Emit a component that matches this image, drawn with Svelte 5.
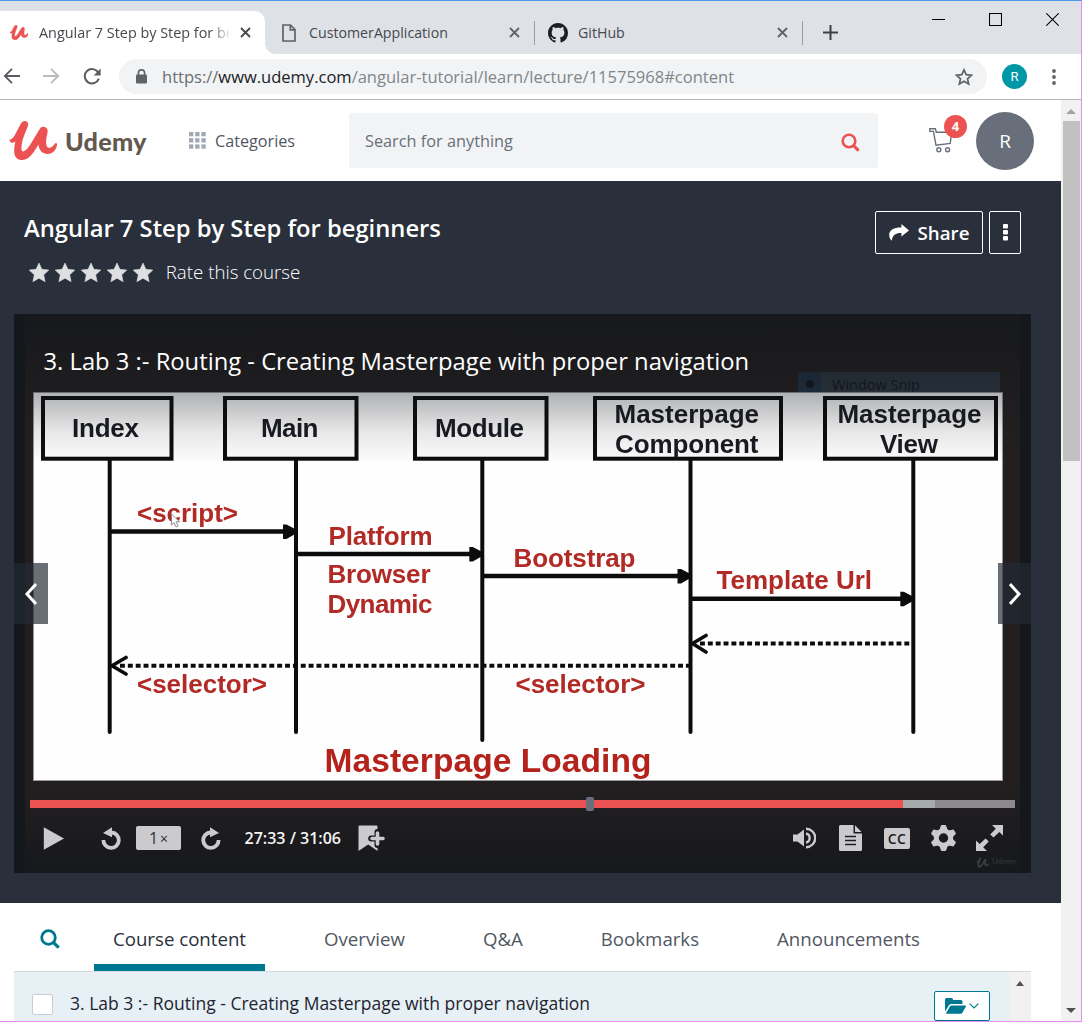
<script>
  const markPath =
    'M.2 18.6C2.2 19 4.2 17 5.6 14.6L11.4 3.6C12.6 1.2 14 0 15.8 0C18.2 0 19.8 2 19 4.6C18 8 14.6 15 13.2 21C12.4 24.6 11.6 30.4 14.2 30.4C17.4 30.4 22 22.6 25.2 17L30.6 8.2C31.8 6.4 33 5.6 34.6 5.8C37.4 6 39 8 38.6 11C38 15 36.4 19.6 37.4 24C38 26.6 39.6 27.4 41.6 26.6C43.8 25.8 45 23.4 46.4 22.2C47.4 21.6 48.2 22.4 48 24C47.4 28.4 44 33 38.6 33C33.6 33 30 29.6 29.4 23.6C25.4 30.6 20.6 39 13.4 39C8 39 5 35.4 5.2 29.6C5.2 26.6 5.6 23.6 6.4 20.2C5 21.6 3.6 22.2 2.2 21.4C1 20.8 .2 19.8 .2 18.6Z';

  const tabs = ['Overview', 'Q&A', 'Bookmarks', 'Announcements'];
  const lecture = '3. Lab 3 :- Routing - Creating Masterpage with proper navigation';

  const boxes = [
    { x: 43, w: 128.5 },
    { x: 225, w: 131.5 },
    { x: 415, w: 131.5 },
    { x: 595, w: 186 },
    { x: 825, w: 171 },
  ];
  const lifelines = [
    [109.7, 732], [296, 732], [482.3, 740], [690.5, 732], [913.3, 732],
  ];
  const calls = [
    [110, 296, 531.5], [296, 482.3, 554], [482, 690.5, 576], [690, 913.3, 598.7],
  ];
  const names = [
    ['Index', 72, 67, 437], ['Main', 261, 57.5, 437], ['Module', 435, 89, 437],
    ['Masterpage', 614.5, 144.5, 422.5], ['Component', 615, 143.5, 452.5],
    ['Masterpage', 837.5, 144, 422.5], ['View', 880, 58, 452.5],
  ];
  const labels = [
    ['<script>', 137, 101, 521.5], ['Platform', 328.5, 104, 544.5],
    ['Browser', 327.5, 103, 582.5], ['Dynamic', 327.5, 105, 612.5],
    ['Bootstrap', 513.5, 122, 566.5], ['Template Url', 716.5, 155.5, 588.5],
    ['<selector>', 137, 130, 692.5], ['<selector>', 515.5, 130, 692.5],
  ];
</script>

<div class="window">
  <div class="strip">
    <div class="tab active">
      <svg class="fav" width="18" height="15" viewBox="0 0 48 39"><path d={markPath} fill="#ec5252" stroke="#ec5252" stroke-width="1.5" /></svg>
      <span class="tabtitle fade">Angular 7 Step by Step for beginners</span>
      <svg class="close" width="11" height="11" viewBox="0 0 11 11"><path d="M1 1l9 9M10 1l-9 9" /></svg>
    </div>
    <div class="tab second">
      <svg width="14" height="18" viewBox="0 0 14 18"><path d="M1 1h7.5l4.5 4.5V17H1zM8.3 1v4.8H13" fill="none" stroke="#5f6368" stroke-width="1.7" /></svg>
      <span class="tabtitle">CustomerApplication</span>
      <svg class="close" width="11" height="11" viewBox="0 0 11 11"><path d="M1 1l9 9M10 1l-9 9" /></svg>
    </div>
    <div class="tab third">
      <svg width="20" height="20" viewBox="0 0 16 16"><path fill="#1b1f23" d="M8 0C3.58 0 0 3.58 0 8c0 3.54 2.29 6.53 5.47 7.59.4.07.55-.17.55-.38 0-.19-.01-.82-.01-1.49-2.01.37-2.53-.49-2.69-.94-.09-.23-.48-.94-.82-1.13-.28-.15-.68-.52-.01-.53.63-.01 1.08.58 1.23.82.72 1.21 1.87.87 2.33.66.07-.52.28-.87.51-1.07-1.78-.2-3.64-.89-3.64-3.95 0-.87.31-1.59.82-2.15-.08-.2-.36-1.02.08-2.12 0 0 .67-.21 2.2.82.64-.18 1.32-.27 2-.27s1.36.09 2 .27c1.53-1.04 2.2-.82 2.2-.82.44 1.1.16 1.92.08 2.12.51.56.82 1.27.82 2.15 0 3.07-1.87 3.75-3.65 3.95.29.25.54.73.54 1.48 0 1.07-.01 1.93-.01 2.2 0 .21.15.46.55.38A8.01 8.01 0 0 0 16 8c0-4.42-3.58-8-8-8z" /></svg>
      <span class="tabtitle">GitHub</span>
      <svg class="close" width="11" height="11" viewBox="0 0 11 11"><path d="M1 1l9 9M10 1l-9 9" /></svg>
    </div>
    <svg class="plus" width="15" height="15" viewBox="0 0 15 15"><path d="M7.5 0v15M0 7.5h15" stroke="#3c4043" stroke-width="2" /></svg>
    <div class="controls">
      <svg width="13" height="13" viewBox="0 0 13 13"><path d="M0 6.5h13" /></svg>
      <svg width="13" height="13" viewBox="0 0 13 13"><path d="M.5 .5h12v12H.5z" /></svg>
      <svg width="13" height="13" viewBox="0 0 13 13"><path d="M.3.3l12.4 12.4M12.7.3L.3 12.7" /></svg>
    </div>
  </div>

  <div class="toolbar">
    <svg class="back" width="17" height="16" viewBox="0 0 17 16"><path d="M17 8H2M9 .8L1.8 8 9 15.2" fill="none" stroke="#5a5e63" stroke-width="1.9" /></svg>
    <svg class="fwd" width="17" height="16" viewBox="0 0 17 16"><path d="M0 8h15M8 .8L15.2 8 8 15.2" fill="none" stroke="#babcbe" stroke-width="1.9" /></svg>
    <svg class="reload" width="18" height="17" viewBox="0 0 18 17"><path d="M15.2 4.6A7.2 7.2 0 1 0 15.8 10.6" fill="none" stroke="#5a5e63" stroke-width="2" /><path d="M17.6.4v7h-7z" fill="#5a5e63" /></svg>
    <div class="omnibox">
      <svg width="11" height="15" viewBox="0 0 11 15"><path d="M2.4 6V4a3.1 3.1 0 0 1 6.2 0v2" fill="none" stroke="#5f6368" stroke-width="1.6" /><rect x="0" y="5.4" width="11" height="9" rx="1.2" fill="#5f6368" /></svg>
      <span class="url"><span class="scheme">https://</span><span class="host">www.udemy.com</span>/angular-tutorial/learn/lecture/11575968#content</span>
      <svg width="18" height="18" viewBox="0 0 18 18"><path d="M9 1.8l2.2 4.9 5.3.5-4 3.6 1.2 5.3L9 13.3l-4.7 2.8 1.2-5.3-4-3.6 5.3-.5z" fill="none" stroke="#5f6368" stroke-width="1.7" /></svg>
    </div>
    <span class="profile">R</span>
    <svg width="4" height="16" viewBox="0 0 4 16"><g fill="#5f6368"><circle cx="2" cy="2" r="1.9" /><circle cx="2" cy="8" r="1.9" /><circle cx="2" cy="14" r="1.9" /></g></svg>
  </div>

  <div class="viewport">
    <div class="page">
      <header>
        <svg class="mark" width="48" height="39" viewBox="0 0 48 39"><path d={markPath} fill="#ec5252" /></svg>
        <span class="brand">Udemy</span>
        <svg class="grid" width="17" height="17" viewBox="0 0 17 17">
          <g fill="#a1a7b3">
            {#each [0, 6.2, 12.4] as gy}{#each [0, 6.2, 12.4] as gx}<rect x={gx} y={gy} width="4.3" height="4.3" />{/each}{/each}
          </g>
        </svg>
        <span class="cat">Categories</span>
        <div class="search">
          <span>Search for anything</span>
          <svg width="19" height="19" viewBox="0 0 19 19"><circle cx="8" cy="8" r="6.3" fill="none" stroke="#ec5252" stroke-width="2.6" /><path d="M12.6 12.6l5 5" stroke="#ec5252" stroke-width="3" /></svg>
        </div>
        <div class="cart">
          <svg width="24" height="25" viewBox="0 0 24 25"><g fill="none" stroke="#686f7a" stroke-width="1.400"><path d="M.8 .8h5.600l.9 3.400h15.400L21.200 15.400 7 17.200 4.400 3.400H.8z" /><circle cx="9.800" cy="21.800" r="2" /><circle cx="18.600" cy="21.800" r="2" /></g></svg>
          <span class="badge">4</span>
        </div>
        <span class="avatar">R</span>
      </header>

      <section class="hero">
        <div class="heading">
          <div>
            <h1>Angular 7 Step by Step for beginners</h1>
            <div class="rate">
              {#each [1, 2, 3, 4, 5] as s (s)}
                <svg width="20" height="19" viewBox="0 0 20 19"><path d="M10 0l2.9 6.3 6.9.8-5.1 4.7 1.4 6.9L10 15.2l-6.1 3.5 1.4-6.9L.2 7.1l6.9-.8z" fill="#dedfe0" stroke="#dedfe0" stroke-width=".6" /></svg>
              {/each}
              <span>Rate this course</span>
            </div>
          </div>
          <div class="actions">
            <button class="share">
              <svg width="20" height="17" viewBox="0 0 20 17"><path d="M12.4 0L20 6.4l-7.6 6.2V9C7 8.8 3.6 10.6 2.8 16.8 1 15 0 12.6.2 10.4.6 5.4 5.4 3.2 12.4 3.4z" fill="#fff" /></svg>
              Share
            </button>
            <button class="more">
              <svg width="5" height="17" viewBox="0 0 5 17"><g fill="#fff"><rect width="5" height="4.4" rx="1" /><rect y="6" width="5" height="4.4" rx="1" /><rect y="12" width="5" height="4.4" rx="1" /></g></svg>
            </button>
          </div>
        </div>

        <div class="player">
          <div class="video">
            <div class="snip"><i></i><span>Window Snip</span></div>
            <svg class="slide" width="970" height="389" viewBox="33 392 970 389">
              <rect x="33" y="392" width="970" height="389" fill="#fefefe" />
              <g class="soft" fill="none" stroke="#0c0c0c">
                {#each boxes as b}<rect x={b.x} y="398" width={b.w} height="60.7" stroke-width="4" />{/each}
                {#each lifelines as [x, y]}<path d="M{x} 460V{y}" stroke-width="4" stroke-linecap="round" />{/each}
                {#each calls as [a, z, y]}
                  <path d="M{a} {y}H{z - 6}" stroke-width="4.6" />
                  <path d="M{z - 13} {y - 7}h3.500l9.500 5v4l-9.500 5.500h-3.500z" fill="#0c0c0c" stroke="none" />
                {/each}
                <path d="M120 665.700H690M700 643.500H913" stroke-width="4" stroke-dasharray="4.900 2.960" />
                <path d="M126 657.500L112 665.700L126 674M706 635.500L692.500 643.500L706 652" stroke-width="3.600" stroke-linecap="round" />
              </g>
              <g class="soft name">
                {#each names as [t, x, w, y]}<text {x} {y} textLength={w}>{t}</text>{/each}
              </g>
              <g class="soft label">
                {#each labels as [t, x, w, y]}<text {x} {y} textLength={w}>{t}</text>{/each}
                <text class="caption" x="324.500" y="771.700" textLength="327">Masterpage Loading</text>
              </g>
              <path d="M171.500 514v11l2.600-2.400 2 4.400 2-.9-2-4.300h3.600z" fill="#fff" stroke="#777" stroke-width=".8" />
              <rect x="33.500" y="392.500" width="969" height="388" fill="none" stroke="#9a9a9a" />
            </svg>
          </div>
          <div class="shade top"></div>
          <div class="shade bottom"></div>
          <div class="lecture">{lecture}</div>
          <button class="nav prev"><svg width="12" height="22" viewBox="0 0 12 22"><path d="M11 1L2 11l9 10" /></svg></button>
          <button class="nav next"><svg width="12" height="22" viewBox="0 0 12 22"><path d="M1 1l9 10L1 21" /></svg></button>

          <div class="console">
            <div class="progress"><span class="played"></span><span class="buffered"></span><i class="handle"></i></div>
            <div class="bar">
              <svg class="i-play" width="21" height="23" viewBox="0 0 21 23"><path d="M.8 .2L21 11.500.8 22.800z" /></svg>
              <svg class="i-back" width="21" height="23" viewBox="0 0 21 23"><path class="line" d="M10.300 5.500A7.700 7.700 0 1 1 2.400 13" /><path d="M2 6L11 .2v10z" /></svg>
              <span class="speed">1<small>×</small></span>
              <svg class="i-fwd" width="21" height="23" viewBox="0 0 21 23"><path class="line" d="M10.700 5.500A7.700 7.700 0 1 0 18.600 13" /><path d="M19 6L10 .2v10z" /></svg>
              <span class="time">27:33 / 31:06</span>
              <svg class="i-mark" width="27" height="27" viewBox="0 0 27 27"><path d="M1.500 .5h17a1 1 0 0 1 1 1V26L10.200 19.500.5 26V1.500a1 1 0 0 1 1-1z" /><path d="M19.500 7v13M13.200 13.500h12.600" stroke="#1a1b1f" stroke-width="6" stroke-linecap="round" /><path d="M19.500 8v11M14 13.500h11" stroke="#cbcbcd" stroke-width="3.600" stroke-linecap="round" /></svg>
              <span class="spacer"></span>
              <svg class="i-vol" width="23" height="22" viewBox="0 0 23 22"><path d="M0 7.500h4.500L11 2.500v17L4.500 14.500H0z" /><path class="thin" d="M13 6.500a4.600 4.600 0 0 1 0 9" /><path class="thin" d="M13 1.800a9.200 9.200 0 0 1 0 18.400" /></svg>
              <svg class="i-doc" width="23" height="26" viewBox="0 0 23 26"><path d="M1.500 0h13v8.500H23v16a1.500 1.500 0 0 1-1.500 1.500h-20A1.500 1.500 0 0 1 0 24.500v-23A1.500 1.500 0 0 1 1.500 0zM16 .2L22.600 7H16z" /><path d="M6 11.500h11M6 15.500h11M6 19.500h11" stroke="#1c1d20" stroke-width="1.500" /></svg>
              <span class="cc">CC</span>
              <svg class="i-gear" width="25" height="26" viewBox="0 0 25 26">
                <circle cx="12.500" cy="13" r="7.200" fill="none" stroke="#cbcbcd" stroke-width="5" />
                {#each [0, 60, 120, 180, 240, 300] as a}<path d="M9.200 4.500L10.400 .5h4.200l1.200 4z" stroke="#cbcbcd" stroke-linejoin="round" transform="rotate({a} 12.5 13)" />{/each}
              </svg>
              <svg class="i-full" width="27" height="26" viewBox="0 0 27 26"><path d="M16 0h11v10.500L23.300 7 17.500 12.600l-3.300-3.200L19.800 3.700zM11 26H0V15.500L3.700 19l5.800-5.600 3.300 3.200L7.200 22.300z" /></svg>
            </div>
            <div class="watermark"><svg width="13" height="11" viewBox="0 0 48 39"><path d={markPath} /></svg>Udemy</div>
          </div>
        </div>
      </section>

      <nav>
        <svg class="find" width="20" height="20" viewBox="0 0 20 20"><circle cx="8.500" cy="8.500" r="6.800" fill="none" stroke="#007791" stroke-width="2.800" /><path d="M13.300 13.300l5.400 5.400" stroke="#007791" stroke-width="3.200" /></svg>
        <span class="current">Course content</span>
        {#each tabs as t}<span class="item">{t}</span>{/each}
      </nav>

      <div class="list">
        <div class="row">
          <span class="check"></span>
          <span class="rowtitle">{lecture}</span>
          <button class="folder">
            <svg width="21" height="16" viewBox="0 0 21 16"><path d="M0 13.500V1.500A1.500 1.500 0 0 1 1.500 0h5A1.500 1.500 0 0 1 8 1.500V2h8a1.500 1.500 0 0 1 1.500 1.500V6H6.500A3 3 0 0 0 4 7.300z" fill="#007791" /><path d="M.8 15.800L5 8.300A1.600 1.600 0 0 1 6.400 7.400H20.300c.6 0 .9.500.6 1L17.200 15a1.600 1.600 0 0 1-1.400.8z" fill="#007791" /></svg>
            <svg width="10" height="6" viewBox="0 0 10 6"><path d="M.7.7L5 5 9.300.7" fill="none" stroke="#007791" stroke-width="1.200" /></svg>
          </button>
        </div>
        <div class="listscroll"><i></i></div>
      </div>
    </div>
    <div class="scroll">
      <i class="up"></i>
      <div class="thumb"></div>
      <i class="down"></i>
    </div>
  </div>
</div>

<style>
  :global(body) { margin: 0; overflow: hidden; }
  * { box-sizing: border-box; }
  svg { display: block; flex: none; }
  button { margin: 0; padding: 0; font: inherit; color: inherit; cursor: pointer; }
  .window {
    width: 1082px; height: 1022px; display: flex; flex-direction: column; overflow: hidden;
    font-family: "Open Sans", "Noto Sans", sans-serif; background: #fff;
    border-top: 1px solid #4a98e8; border-right: 1px solid #e58cf0; border-bottom: 1px solid #e58cf0;
  }

  .strip { height: 53px; flex: none; display: flex; background: #dee1e6; padding-top: 10px; }
  .tab { display: flex; align-items: center; height: 43px; font-size: 14.2px; color: #45494d; white-space: nowrap; }
  .tabtitle { flex: 1; overflow: hidden; }
  .close { fill: none; stroke: #5f6368; stroke-width: 1.8; }
  .active { position: relative; width: 265px; background: #fff; border-radius: 0 10px 0 0; padding: 0 14.500px 0 10px; }
  .active::after {
    content: ""; position: absolute; left: 265px; bottom: 0; width: 10px; height: 10px;
    background: radial-gradient(circle at 100% 0, transparent 9.500px, #fff 10px);
  }
  .active .tabtitle { margin: 0 11px; font-size: 14.400px; }
  .active .close { stroke: #45494d; }
  .fade { -webkit-mask-image: linear-gradient(90deg, #000 172px, transparent 192px); mask-image: linear-gradient(90deg, #000 172px, transparent 192px); }
  .second { width: 269.500px; padding: 0 15px 0 17px; }
  .second .tabtitle { margin-left: 13px; }
  .third { width: 268px; padding: 0 14.500px 0 13.500px; }
  .third .tabtitle { margin-left: 10px; }
  .second, .third { background: linear-gradient(#9b9ea3, #9b9ea3) right 10px / 1px 24px no-repeat; }
  .plus { margin: 14px 0 0 20px; }
  .controls { display: flex; gap: 44px; margin: 2px 22px 0 auto; }
  .controls svg { fill: none; stroke: #000; stroke-width: 1.050; }

  .toolbar { height: 46px; flex: none; display: flex; align-items: center; padding: 0 25px 0 3px; border-bottom: 1px solid #b4b6b8; }
  .back, .fwd, .reload { position: relative; top: -.5px; }
  .fwd { margin-left: 23px; }
  .reload { margin-left: 23px; }
  .omnibox { width: 868px; height: 35px; margin-left: 18px; border-radius: 18px; background: #f1f3f4; display: flex; align-items: center; padding: 0 14px 0 17px; }
  .url { flex: 1; margin-left: 15px; font-size: 16.520px; color: #80868b; white-space: nowrap; }
  .scheme { color: #6a6e73; }
  .host { color: #202124; }
  .profile { width: 25px; height: 25px; margin: 0 auto 0 15px; border-radius: 50%; background: #0097a7; color: #fff; font: 13px/26px Roboto, sans-serif; text-align: center; }

  .viewport { flex: 1; min-height: 0; display: flex; }
  .page { width: 1061px; display: flex; flex-direction: column; overflow: hidden; }
  header { height: 81px; flex: none; display: flex; align-items: center; padding-left: 9px; }
  .brand { width: 89px; margin-left: 8px; font: 900 25.200px/30px Lato, sans-serif; letter-spacing: .25px; color: #64594f; }
  .grid { margin-left: 35px; }
  .cat { width: 80px; margin-left: 9px; font-size: 16.200px; color: #505763; }
  .search { width: 529px; height: 55px; margin-left: 54px; padding: 0 18px 0 16px; border-radius: 3px; background: #f2f3f5; display: flex; align-items: center; justify-content: space-between; font-size: 16.300px; color: #686f7a; }
  .search svg { margin-top: 4px; }
  .cart { position: relative; margin-left: 51px; }
  .badge { position: absolute; left: 15px; top: -13px; width: 23px; height: 23px; border-radius: 50%; background: #ec5252; color: #fff; font-size: 13px; font-weight: 700; line-height: 22px; text-align: center; }
  .avatar { width: 58px; height: 58px; margin-left: 23px; border-radius: 50%; background: #686f7a; color: #fff; font-size: 19px; line-height: 58px; text-align: center; }

  .hero { height: 722px; flex: none; background: #29303b; color: #fff; padding: 30px 30px 0 14px; }
  .heading { height: 103px; display: flex; justify-content: space-between; padding: 0 10px; }
  h1 { margin: 0; font-size: 23.750px; line-height: 34px; font-weight: 600; }
  .rate { display: flex; align-items: center; gap: 6.100px; height: 24px; margin: 14px 0 0 5px; font-size: 18.700px; font-weight: 300; }
  .rate span { margin-left: 6.300px; }
  .rate svg { margin-bottom: -2px; }
  .actions { display: flex; gap: 6px; height: 43px; }
  .actions button { border: 1px solid #fff; border-radius: 2px; background: none; display: flex; align-items: center; justify-content: center; }
  .actions .share { width: 108px; gap: 9px; font-size: 18.750px; font-weight: 600; }
  .more { width: 32px; }

  .player { position: relative; width: 1017px; height: 559px; background: #14171c; display: flex; flex-direction: column; justify-content: flex-end; overflow: hidden; }
  .video { position: absolute; inset: 0 11px; background: #231f20; }
  .slide { position: absolute; left: 8px; top: 78px; }
  .soft { filter: blur(.5px); }
  .slide text { font-family: "Liberation Sans", Arial, sans-serif; font-weight: 700; font-size: 26px; }
  .name { fill: #191a22; }
  .label { fill: #b12a25; }
  .slide .caption { font-size: 33.500px; fill: #b4221c; }
  .snip { position: absolute; left: 773px; top: 58px; width: 202px; height: 34px; display: flex; background: linear-gradient(90deg, #213347 23px, #2e3946 23px); color: #131416; font-size: 14.500px; line-height: 20px; white-space: nowrap; }
  .snip i { width: 8px; height: 8px; margin: 8px 14px 0 8px; border-radius: 50%; background: #131416; }
  .snip span { margin: 2.500px 0 0 4px; }
  .shade { position: absolute; left: 0; right: 0; }
  .shade.top { top: 0; height: 150px; background: linear-gradient(rgba(20, 23, 28, .8), rgba(20, 23, 28, .33) 53%, rgba(20, 23, 28, .1) 78%, transparent); }
  .shade.bottom { bottom: 0; height: 90px; background: linear-gradient(transparent, rgba(20, 23, 28, .85)); }
  .lecture { position: absolute; left: 29.500px; top: 27px; font-size: 23.770px; line-height: 40px; white-space: nowrap; }
  .nav { position: absolute; top: 249px; height: 61px; border: 0; background: rgba(35, 43, 52, .68); display: flex; align-items: center; }
  .nav path { fill: none; stroke: #fff; stroke-width: 3; }
  .prev { left: 0; width: 34px; padding-left: 11px; }
  .next { right: 0; width: 33px; padding-left: 11px; }

  .console { position: relative; height: 73px; padding: 0 16px; }
  .progress { position: relative; height: 8px; display: flex; background: #8b898b; }
  .played { width: 873px; background: #ec5252; }
  .buffered { width: 32px; background: #a5aaab; }
  .handle { position: absolute; left: 556px; top: -3px; width: 8px; height: 14px; border-radius: 2px; background: #686f7a; }
  .bar { height: 60px; display: flex; align-items: center; padding: 0 12px 0 13px; fill: #cbcbcd; }
  .line { fill: none; stroke: #cbcbcd; stroke-width: 3.800; }
  .thin { fill: none; stroke: #cbcbcd; stroke-width: 2.400; }
  .i-back { margin-left: 36.500px; }
  .speed { width: 45px; height: 24px; margin-left: 14.500px; border-radius: 2px; background: #cbcbcd; color: #29303b; font-size: 16px; line-height: 25px; text-align: center; }
  .speed small { margin-left: 2px; font-size: 14px; }
  .i-fwd { margin-left: 18.500px; }
  .time { width: 97px; margin-left: 24px; font-size: 16px; font-weight: 600; white-space: nowrap; color: #f4f4f4; }
  .i-mark { margin-left: 16.500px; }
  .spacer { flex: 1; }
  .i-doc { margin-left: 23px; }
  .cc { width: 26px; height: 21px; margin-left: 22px; border-radius: 2px; background: #cbcbcd; color: #1c1d20; font-size: 14px; font-weight: 600; line-height: 21px; letter-spacing: .5px; text-align: center; }
  .i-gear { margin-left: 20.500px; }
  .i-full { margin-left: 20.500px; }
  .watermark { position: absolute; right: 15px; bottom: 5px; display: flex; align-items: center; gap: 3px; color: #303135; fill: #3a3b40; font: 700 7.500px/12px Lato, sans-serif; }

  nav { height: 68px; flex: none; display: flex; align-items: center; padding-left: 40px; font-size: 18.670px; font-weight: 380; color: #505763; }
  .find { margin-top: 3px; }
  .current { width: 171px; height: 68px; margin-left: 34px; padding-top: 4px; border-bottom: 7px solid #007791; color: #29303b; line-height: 64px; text-align: center; white-space: nowrap; }
  .item { line-height: 64px; padding-top: 4px; margin-left: 78px; }
  .item:nth-of-type(2) { margin-left: 59px; }

  .list { flex: 1; width: 1017px; margin-left: 14px; border-top: 1px solid #d6dadd; display: flex; overflow: hidden; }
  .row { width: 996px; background: #e6f0f5; display: flex; align-items: flex-start; padding: 19px 20px 0 18px; }
  .check { width: 21px; height: 21px; margin-top: 3px; border: 1px solid #c9ccd0; border-radius: 2px; background: #fff; }
  .rowtitle { flex: 1; margin-left: 17px; font-size: 17.520px; line-height: 24px; color: #1f2430; }
  .folder { width: 56px; height: 30px; border: 1px solid #007791; border-radius: 2px; background: #fff; display: flex; align-items: center; justify-content: center; gap: 3px; }
  .listscroll { width: 21px; background: #f1f1f1; }
  .listscroll i { display: block; width: 0; margin: 9px auto 0 6px; border: 4.500px solid transparent; border-top: 0; border-bottom: 5px solid #505050; }

  .scroll { width: 20px; background: #f1f1f1; display: flex; flex-direction: column; align-items: center; }
  .up { margin-top: 9px; border: 5px solid transparent; border-top: 0; border-bottom: 5px solid #a3a3a3; }
  .thumb { width: 17px; height: 340px; margin: 7px 0 auto 1px; background: #c1c1c1; }
  .down { margin-bottom: 8px; border: 5px solid transparent; border-bottom: 0; border-top: 5px solid #505050; }
</style>
